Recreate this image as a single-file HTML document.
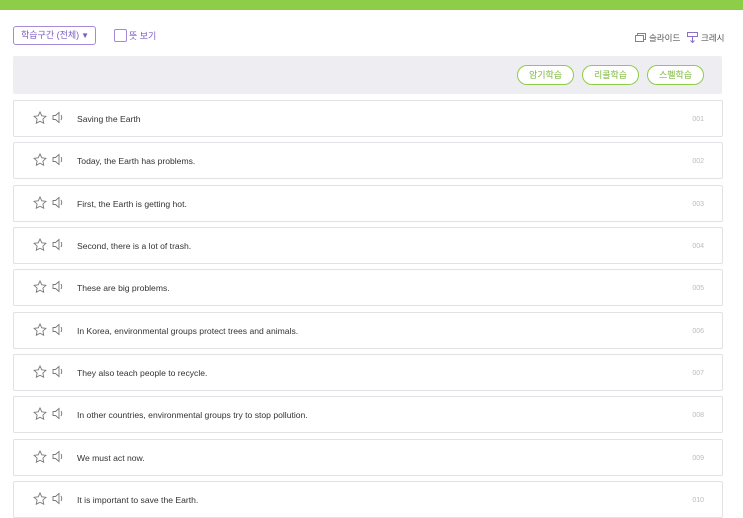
<!DOCTYPE html><html><head><meta charset="utf-8"><style>
body{margin:0;width:743px;height:518px;overflow:hidden;background:#fff;font-family:"Liberation Sans","Noto Sans CJK KR",sans-serif;position:relative}
.bar{position:absolute;left:0;top:0;width:743px;height:10px;background:#8dcd47}
.sel{position:absolute;left:13px;top:26px;height:17px;border:1px solid #a48ad8;border-radius:3px;font-size:9px;color:#7c5bc4;line-height:17px;padding-left:7px;width:74px}
.sel i{position:absolute;right:6px;top:0;font-style:normal;font-size:8px}
.cb{position:absolute;left:114px;top:29px;width:11px;height:11px;border:1px solid #a48ad8;border-radius:2px}
.cbl{position:absolute;left:129px;top:29px;font-size:9px;color:#7c5bc4}
.tr{position:absolute;top:32px;font-size:8.5px;color:#555}
.panel{position:absolute;left:13px;top:56px;width:709px;height:38px;background:#eeedf2;border-radius:2px}
.btn{position:absolute;top:65px;height:18px;width:55px;border:1.5px solid #8dcd47;border-radius:10px;background:#fff;font-size:9px;color:#7ab83a;text-align:center;line-height:18px}
.row{position:absolute;left:13px;width:708px;height:35px;border:1px solid #e2e2e6;border-radius:2px;background:#fff}
.row .t{position:absolute;left:63px;top:13px;font-size:8.6px;color:#333}
.row .n{position:absolute;right:18px;top:15px;font-size:7px;color:#bbb}
.row svg{position:absolute;top:10px}
</style></head><body>
<div class="bar"></div>
<div class="sel">학습구간 (전체)<i>▼</i></div>
<div class="cb"></div><div class="cbl">뜻 보기</div>
<svg style="position:absolute;left:635px;top:33px" width="11" height="9"><rect x="0.5" y="2.5" width="8" height="6" fill="none" stroke="#8a70c8"/><path d="M2.5 2.5V0.5h8v6h-2" fill="none" stroke="#8a70c8"/></svg>
<div class="tr" style="left:649px">슬라이드</div>
<svg style="position:absolute;left:687px;top:32px" width="11" height="11"><path d="M0.5 0.5h10v4h-10zM5.5 4.5v6M3.5 8.5l2 2 2-2" fill="none" stroke="#8a70c8"/></svg>
<div class="tr" style="left:701px">크레시</div>
<div class="panel"></div>
<div class="btn" style="left:517px">암기학습</div>
<div class="btn" style="left:582px">리콜학습</div>
<div class="btn" style="left:647px">스펠학습</div>
<div id="rows"></div>
<script>
var s=["Saving the Earth","Today, the Earth has problems.","First, the Earth is getting hot.","Second, there is a lot of trash.","These are big problems.","In Korea, environmental groups protect trees and animals.","They also teach people to recycle.","In other countries, environmental groups try to stop pollution.","We must act now.","It is important to save the Earth."];
var h="";
for(var i=0;i<10;i++){var y=100+Math.round(i*42.35);
h+='<div class="row" style="top:'+y+'px"><svg style="left:19px" width="14" height="13"><path d="M7 1l1.8 3.8 4.1.5-3 2.8.8 4.1L7 10.2 3.3 12.2l.8-4.1-3-2.8 4.1-.5z" fill="none" stroke="#777" stroke-width="0.9"/></svg><svg style="left:38px" width="13" height="13"><path d="M1 4.5h2.5L7 1.5v10L3.5 8.5H1z" fill="none" stroke="#777" stroke-width="0.9"/><path d="M9 4q1.5 2.5 0 5" fill="none" stroke="#777" stroke-width="0.9"/></svg><div class="t">'+s[i]+'</div><div class="n">'+("00"+(i+1)).slice(-3)+'</div></div>';}
document.getElementById("rows").innerHTML=h;
</script>
</body></html>
